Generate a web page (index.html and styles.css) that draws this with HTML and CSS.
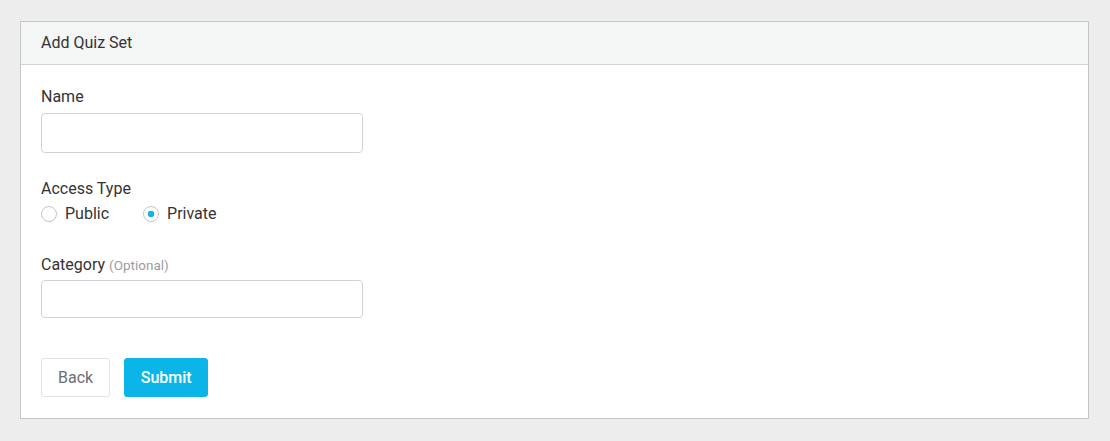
FILE: index.html
```html
<!DOCTYPE html>
<html lang="en">
  <head>
    <meta charset="UTF-8" />
    <meta name="viewport" content="width=device-width, initial-scale=1.0" />
    <title>Add Quiz Set</title>
    <link rel="stylesheet" href="styles.css">
  </head>
  <body>
    <div class="card">
      <div class="card-header">Add Quiz Set</div>
      <form class="card-body">
        <div class="field">
          <label class="label" for="name">Name</label>
          <input id="name" class="input" type="text" />
        </div>

        <div class="field field-radios">
          <span class="label">Access Type</span>
          <div class="radios">
            <label class="radio">
              <input type="radio" name="access" value="public" />
              Public
            </label>
            <label class="radio">
              <input type="radio" name="access" value="private" checked />
              Private
            </label>
          </div>
        </div>

        <div class="field field-category">
          <label class="label" for="category">Category <small>(Optional)</small></label>
          <input id="category" class="input input-sm" type="text" />
        </div>

        <div class="actions">
          <button type="button" class="btn btn-default">Back</button>
          <button type="submit" class="btn btn-primary">Submit</button>
        </div>
      </form>
    </div>
  </body>
</html>
```

FILE: styles.css
```css
html,
body {
  margin: 0;
  background-color: #ededed;
}

body {
  padding: 21px 21px 22px 20px;
  font-family: Roboto, "Liberation Sans", sans-serif;
  font-size: 16px;
  line-height: 20px;
  color: #333;
}

.card {
  border: 1px solid #c6c6c6;
  background-color: #fff;
}

.card-header {
  height: 42px;
  padding: 0 20px;
  display: flex;
  align-items: center;
  background-color: #f4f5f5;
  border-bottom: 1px solid #d3d3d3;
}

.card-body {
  display: flex;
  flex-direction: column;
  align-items: flex-start;
  padding: 22px 20px 21px;
}

.field {
  display: flex;
  flex-direction: column;
  margin-bottom: 26px;
}

.field-radios {
  margin-bottom: 31px;
}

.field-category {
  margin-bottom: 40px;
}

.label {
  margin-bottom: 6px;
}

.field-radios .label {
  margin-bottom: 5px;
}

.field-category .label {
  margin-bottom: 5px;
}

.label small {
  font-size: 13.5px;
  color: #9a9da2;
}

.input {
  box-sizing: border-box;
  width: 322px;
  height: 40px;
  margin: 0;
  padding: 0 12px;
  border: 1px solid #cfd3d8;
  border-radius: 4px;
  font: inherit;
  outline: none;
}

.input-sm {
  height: 38px;
}

.radios {
  display: flex;
  gap: 34px;
}

.radio {
  display: inline-flex;
  align-items: center;
  gap: 8px;
}

.radio input {
  appearance: none;
  -webkit-appearance: none;
  box-sizing: border-box;
  width: 16px;
  height: 16px;
  margin: 0;
  border: 1px solid #bfc4ca;
  border-radius: 50%;
  background-color: #fff;
}

.radio input:checked {
  background: radial-gradient(circle, #14b2e6 0 3px, #fff 3.6px);
}

.actions {
  display: flex;
  gap: 14px;
}

.btn {
  box-sizing: border-box;
  height: 39px;
  padding: 0 16px;
  border-radius: 3px;
  font: inherit;
  cursor: pointer;
}

.btn-default {
  border: 1px solid #e1e3e5;
  background-color: #fff;
  color: #6b6e72;
}

.btn-primary {
  width: 84px;
  padding: 0;
  border: 1px solid #0cb5e8;
  background-color: #0cb5e8;
  color: #fff;
  font-weight: 500;
}
```
